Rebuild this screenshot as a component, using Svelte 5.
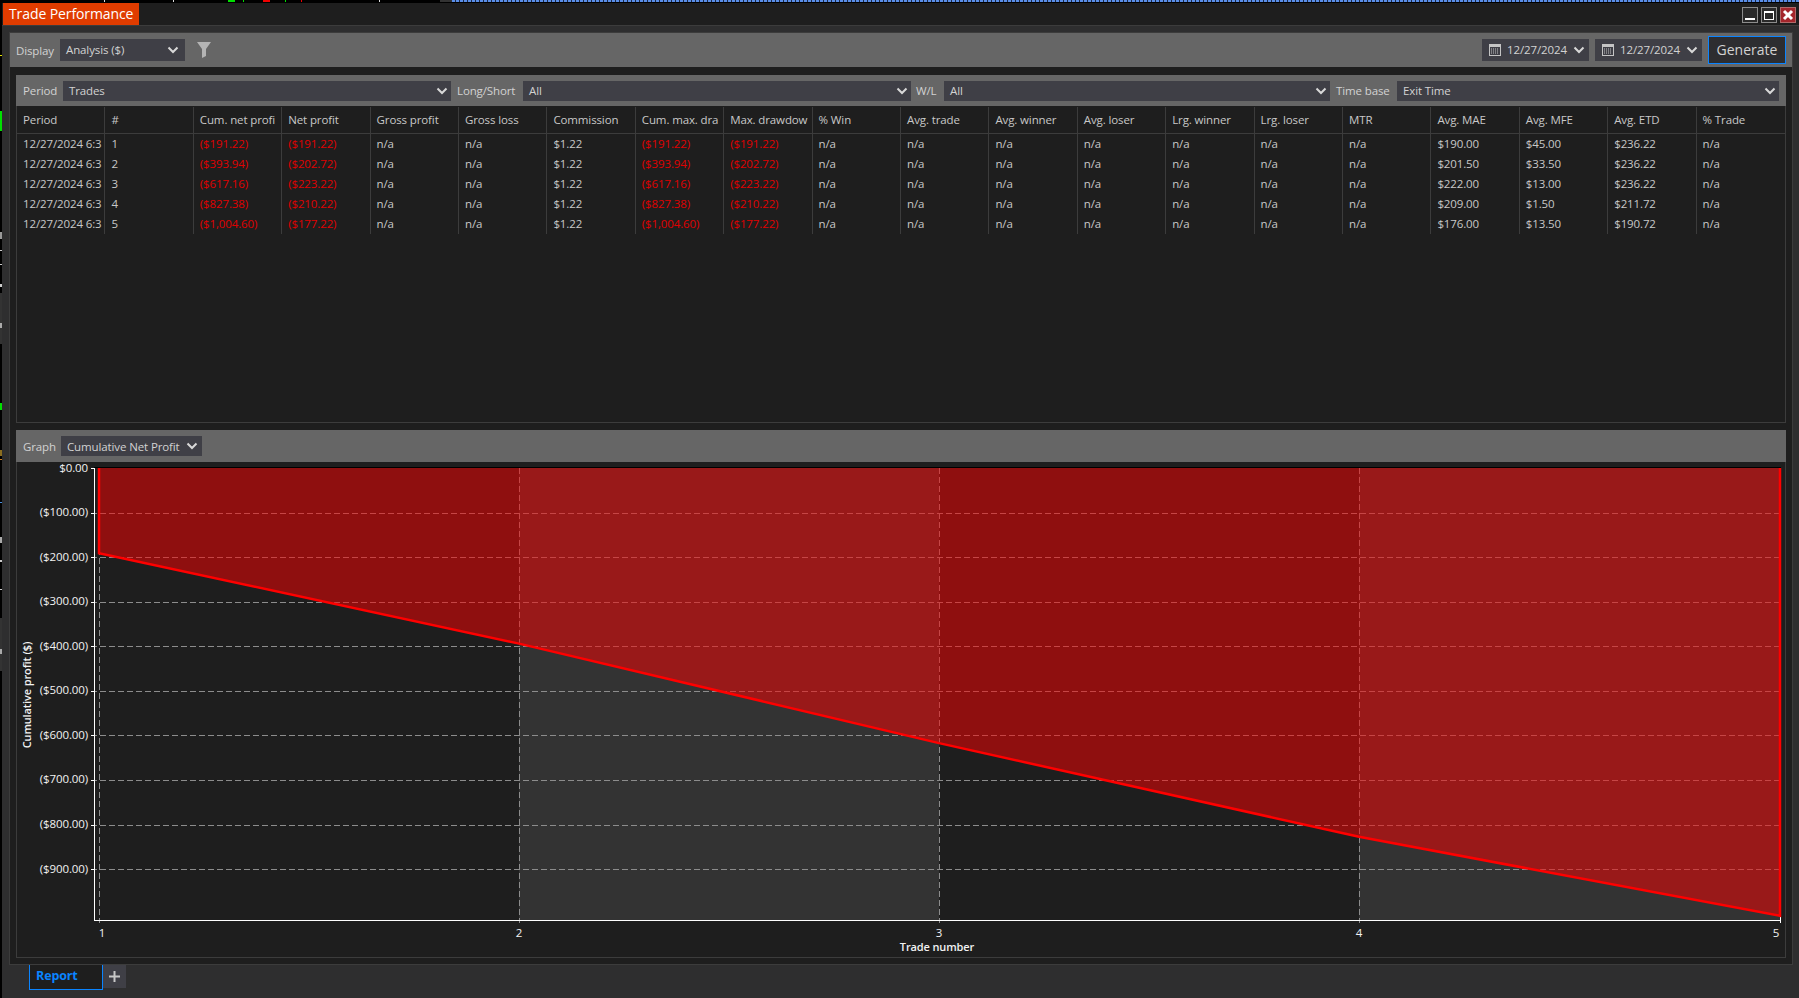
<script lang="ts">
  const headers = ['Period', '#', 'Cum. net profi', 'Net profit', 'Gross profit', 'Gross loss', 'Commission', 'Cum. max. dra', 'Max. drawdow', '% Win', 'Avg. trade', 'Avg. winner', 'Avg. loser', 'Lrg. winner', 'Lrg. loser', 'MTR', 'Avg. MAE', 'Avg. MFE', 'Avg. ETD', '% Trade'];

  const trades = [
    { n: 1, cum: '($191.22)', net: '($191.22)', mae: '$190.00', mfe: '$45.00', etd: '$236.22' },
    { n: 2, cum: '($393.94)', net: '($202.72)', mae: '$201.50', mfe: '$33.50', etd: '$236.22' },
    { n: 3, cum: '($617.16)', net: '($223.22)', mae: '$222.00', mfe: '$13.00', etd: '$236.22' },
    { n: 4, cum: '($827.38)', net: '($210.22)', mae: '$209.00', mfe: '$1.50', etd: '$211.72' },
    { n: 5, cum: '($1,004.60)', net: '($177.22)', mae: '$176.00', mfe: '$13.50', etd: '$190.72' },
  ];

  const rows = trades.map((t) => [
    '12/27/2024 6:3', t.n, t.cum, t.net, 'n/a', 'n/a', '$1.22', t.cum, t.net,
    'n/a', 'n/a', 'n/a', 'n/a', 'n/a', 'n/a', 'n/a', t.mae, t.mfe, t.etd, 'n/a',
  ]);
  const redCols = [2, 3, 7, 8];

  const yOf = (v: number) => 468 + v * 0.4457;
  const xs = [99, 519, 939, 1359, 1780];
  const cums = [191.22, 393.94, 617.16, 827.38, 1004.6];
  const linePts = xs.map((x, i) => `${x},${yOf(cums[i]).toFixed(1)}`).join(' ');
  const outline = `99,468 ${linePts} 1780,468`;
  const yTicks = [100, 200, 300, 400, 500, 600, 700, 800, 900];
  const xLabels = [[102, '1'], [519, '2'], [939, '3'], [1359, '4'], [1776, '5']];

  const topBits = [
    [104, 1, '#ddd'], [173, 1, '#ddd'], [228, 7, '#00e000'], [243, 1, '#00e000'], [263, 7, '#f00000'],
    [285, 1, '#00e000'], [301, 1, '#f00000'], [379, 1, '#ddd'], [440, 12, '#333'],
  ];
  const leftBits = [
    [55, 1, '#e6e600'], [111, 20, '#00e000'], [232, 7, '#999'], [250, 1, '#ccc'], [264, 1, '#ccc'], [284, 3, '#ccc'],
    [293, 51, '#333'], [323, 5, '#aaa'], [403, 7, '#00e000'], [450, 6, '#8a6d1f'], [459, 1, '#d08020'],
    [502, 1, '#4a90e2'], [537, 6, '#aaa'], [560, 2, '#ccc'], [589, 1, '#ccc'], [618, 53, '#333'], [649, 5, '#aaa'],
  ];
</script>

{#snippet chevron()}
  <svg class="chev" width="12" height="8" viewBox="0 0 12 8"><path d="M1.5 1.5 6 6l4.5-4.5" fill="none" stroke="#d8d8d8" stroke-width="2" /></svg>
{/snippet}

{#snippet calendar()}
  <svg class="cal" width="12" height="12" viewBox="0 0 12 12">
    <rect x="0.5" y="0.5" width="11" height="11" fill="#3f3f46" stroke="#c4c4c4" />
    <rect x="1" y="1" width="10" height="2" fill="#c4c4c4" />
    <path d="M2 5h8M2 7h8M2 9h8" stroke="#c4c4c4" stroke-dasharray="1 1" />
  </svg>
{/snippet}

<div class="screen">
  <div class="topstrip">
    {#each topBits as b}
      <i style="left:{b[0]}px;width:{b[1]}px;background:{b[2]}"></i>
    {/each}
    <i class="dashes"></i>
  </div>
  <div class="main">
    <div class="leftstrip">
      {#each leftBits as b}
        <i style="top:{b[0] - 3}px;height:{b[1]}px;background:{b[2]}"></i>
      {/each}
    </div>
    <div class="window">
      <div class="titlebar">
        <div class="title">Trade Performance</div>
        <div class="winbtns">
          <span class="wb"><b class="min"></b></span>
          <span class="wb"><b class="max"></b></span>
          <span class="wb close">
            <svg width="12" height="12" viewBox="0 0 12 12"><path d="M2 2l8 8M10 2l-8 8" stroke="#fff" stroke-width="3" /></svg>
          </span>
        </div>
      </div>

      <div class="content">
        <div class="outer">
          <div class="toolbar top">
            <span class="lbl l-display">Display</span>
            <div class="sel display"><span>Analysis ($)</span>{@render chevron()}</div>
            <svg class="filter" width="14" height="16" viewBox="0 0 14 16"><path d="M0 0h14L9 7v7l-4 2V7z" fill="#b4b4b4" /></svg>
            <div class="spacer"></div>
            <div class="sel date">{@render calendar()}<span>12/27/2024</span>{@render chevron()}</div>
            <div class="sel date">{@render calendar()}<span>12/27/2024</span>{@render chevron()}</div>
            <button class="generate">Generate</button>
          </div>

          <div class="inner">
            <div class="grid-panel">
              <div class="toolbar filters">
                <span class="lbl l-period">Period</span>
                <div class="sel f1"><span>Trades</span>{@render chevron()}</div>
                <span class="lbl l-ls">Long/Short</span>
                <div class="sel f2"><span>All</span>{@render chevron()}</div>
                <span class="lbl l-wl">W/L</span>
                <div class="sel f3"><span>All</span>{@render chevron()}</div>
                <span class="lbl l-tb">Time base</span>
                <div class="sel f4"><span>Exit Time</span>{@render chevron()}</div>
              </div>
              <div class="table">
                {#each headers as h}
                  <div class="th">{h}</div>
                {/each}
                {#each rows as row}
                  {#each row as cell, c}
                    <div class="td" class:red={redCols.includes(c)}>{cell}</div>
                  {/each}
                {/each}
              </div>
            </div>

            <div class="graph-panel">
              <div class="toolbar graphbar">
                <span class="lbl l-graph">Graph</span>
                <div class="sel g1"><span>Cumulative Net Profit</span>{@render chevron()}</div>
              </div>
              <svg class="chart" width="1767" height="495" viewBox="17 462 1767 495">
                <rect x="519" y="468" width="420" height="452" fill="#333" />
                <rect x="1359" y="468" width="421" height="452" fill="#333" />
                {#each yTicks as t}
                  <line x1="91" x2="1780" y1={Math.round(yOf(t)) + 0.5} y2={Math.round(yOf(t)) + 0.5} stroke="#8c8c8c" stroke-dasharray="6 3" />
                  <line x1="91" x2="95" y1={Math.round(yOf(t)) + 0.5} y2={Math.round(yOf(t)) + 0.5} stroke="#fff" />
                  <text class="tick" x="88" y={yOf(t) + 3.5} text-anchor="end">(${t}.00)</text>
                {/each}
                {#each xs.slice(0, 4) as x}
                  <line x1={x + 0.5} x2={x + 0.5} y1="468" y2="923" stroke="#8c8c8c" stroke-dasharray="6 3" />
                {/each}
                <line x1="1780.5" x2="1780.5" y1="916" y2="923" stroke="#fff" />
                <line x1="91" x2="95" y1="468.5" y2="468.5" stroke="#fff" />
                <text class="tick" x="88" y="471.5" text-anchor="end">$0.00</text>
                <line x1="94" x2="1781" y1="467.5" y2="467.5" stroke="#000" />
                <polygon points={outline} fill="#ff0000" fill-opacity="0.5" />
                <polyline points={outline} fill="none" stroke="#ff0000" stroke-width="2.5" />
                <line x1="94.5" x2="94.5" y1="468" y2="921" stroke="#fff" />
                <line x1="94" x2="1781" y1="920.5" y2="920.5" stroke="#fff" />
                {#each xLabels as l}
                  <text class="tick" x={l[0]} y="937" text-anchor="middle">{l[1]}</text>
                {/each}
                <text class="axis" x="937" y="951" text-anchor="middle">Trade number</text>
                <text class="axis" transform="translate(31 695) rotate(-90)" text-anchor="middle">Cumulative profit ($)</text>
              </svg>
            </div>
          </div>
        </div>

        <div class="tabs">
          <div class="tab">Report</div>
          <div class="plus">
            <svg width="11" height="11" viewBox="0 0 11 11"><path d="M5.5 0v11M0 5.5h11" stroke="#c8c8c8" stroke-width="2" /></svg>
          </div>
        </div>
      </div>
    </div>
  </div>
</div>

<style>
  :global(body) {
    margin: 0;
    background: #000;
    overflow: hidden;
  }
  .screen {
    width: 1799px;
    height: 998px;
    display: flex;
    flex-direction: column;
    font-family: "Open Sans", sans-serif;
    font-size: 11.5px;
    letter-spacing: -0.12px;
    color: #c8c8c8;
    background: #000;
    overflow: hidden;
  }
  .topstrip {
    height: 3px;
    position: relative;
    flex: none;
  }
  .topstrip i {
    position: absolute;
    top: 0;
    height: 2px;
  }
  .topstrip .dashes {
    left: 452px;
    right: 0;
    height: 2px;
    background: repeating-linear-gradient(90deg, #5a8ee8 0 3px, #1e2a44 3px 4px);
  }
  .main {
    flex: 1;
    display: flex;
    min-height: 0;
  }
  .leftstrip {
    width: 2px;
    flex: none;
    position: relative;
  }
  .leftstrip i {
    position: absolute;
    left: 0;
    width: 2px;
  }
  .window {
    flex: 1;
    display: flex;
    flex-direction: column;
    min-width: 0;
    background: #2e2e2f;
  }
  .titlebar {
    height: 23px;
    box-sizing: border-box;
    flex: none;
    display: flex;
    justify-content: space-between;
    background: #1e1e1e;
    border-bottom: 1px solid #3c3c3c;
    padding-left: 1px;
  }
  .title {
    width: 136px;
    box-sizing: border-box;
    padding-left: 6px;
    background: #e03c00;
    color: #fff;
    font-size: 14px;
    letter-spacing: -0.1px;
    line-height: 21px;
    white-space: nowrap;
  }
  .winbtns {
    display: flex;
    gap: 3px;
    padding: 4px 3px 0 0;
  }
  .wb {
    width: 16px;
    height: 16px;
    box-sizing: border-box;
    border: 1px solid #8c8c8c;
    background: #2a2a2a;
    position: relative;
    display: flex;
    align-items: center;
    justify-content: center;
  }
  .wb .min {
    position: absolute;
    left: 2px;
    right: 2px;
    bottom: 2px;
    height: 2px;
    background: #fff;
  }
  .wb .max {
    width: 10px;
    height: 9px;
    border: 1px solid #fff;
    border-top-width: 2px;
    box-sizing: border-box;
  }
  .wb.close {
    background: #a4262c;
    border-color: #b06a6a;
  }
  .content {
    flex: 1;
    display: flex;
    flex-direction: column;
    min-height: 0;
  }
  .outer {
    margin: 6px 6px 0 7px;
    height: 933px;
    flex: none;
    box-sizing: border-box;
    border: 1px solid #3c3c3c;
    background: #1e1e1e;
    display: flex;
    flex-direction: column;
  }
  .toolbar {
    background: #666;
    display: flex;
    align-items: center;
    flex: none;
  }
  .toolbar.top {
    height: 34px;
    padding: 0 6px;
    box-sizing: border-box;
  }
  .lbl {
    color: #d2d2d2;
    white-space: nowrap;
    flex: none;
  }
  .l-display { width: 44px; }
  .sel {
    background: #3f3f46;
    color: #d2d2d2;
    display: flex;
    align-items: center;
    box-sizing: border-box;
    padding: 0 4px 0 6px;
    white-space: nowrap;
    flex: none;
  }
  .sel .chev {
    margin-left: auto;
  }
  .sel .cal {
    margin-right: 6px;
  }
  .display {
    width: 125px;
    height: 22px;
    padding-right: 6px;
  }
  .filter {
    margin-left: 12px;
  }
  .spacer {
    flex: 1;
  }
  .date {
    width: 107px;
    height: 22px;
    margin-right: 6px;
    padding-left: 7px;
  }
  .generate {
    width: 78px;
    height: 28px;
    box-sizing: border-box;
    border: 1px solid #0a84ff;
    background: #2d2d30;
    color: #d2d2d2;
    font-family: inherit;
    font-size: 14px;
    padding: 0 0 2px;
  }
  .top .sel span {
    margin-top: -1px;
  }
  .inner {
    flex: 1;
    min-height: 0;
    margin: 8px 6px 6px 6px;
    display: flex;
    flex-direction: column;
    gap: 7px;
  }
  .grid-panel {
    height: 348px;
    flex: none;
    box-sizing: border-box;
    border: 1px solid #3c3c3c;
    border-top: 0;
    display: flex;
    flex-direction: column;
  }
  .filters {
    height: 31px;
    margin: 0 -1px;
  }
  .filters .sel {
    height: 20px;
    padding-right: 3px;
  }
  .l-period { margin-left: 7px; width: 40px; }
  .f1 { width: 388px; }
  .l-ls { margin-left: 6px; width: 66px; }
  .f2 { width: 388px; }
  .l-wl { margin-left: 5px; width: 28px; }
  .f3 { width: 386px; }
  .l-tb { margin-left: 6px; width: 61px; }
  .f4 { width: 382px; }
  .table {
    margin-top: 1px;
    display: grid;
    grid-template-columns: repeat(20, 1fr);
    grid-template-rows: 27px repeat(5, 20px);
  }
  .th, .td {
    box-sizing: border-box;
    padding: 0 0 2px 6px;
    border-right: 1px solid #3c3c3c;
    white-space: nowrap;
    overflow: hidden;
    display: flex;
    align-items: center;
  }
  .th {
    border-bottom: 1px solid #3c3c3c;
  }
  .th:nth-child(20), .td:nth-child(20n) {
    border-right: 0;
  }
  .td.red {
    color: #e00000;
  }
  .graph-panel {
    flex: 1;
    min-height: 0;
    box-sizing: border-box;
    border: 1px solid #3c3c3c;
    border-top: 0;
    display: flex;
    flex-direction: column;
  }
  .graphbar {
    height: 32px;
    margin: 0 -1px;
    padding-left: 7px;
  }
  .l-graph { width: 38px; }
  .g1 {
    width: 141px;
    height: 20px;
  }
  .chart {
    display: block;
    flex: none;
    overflow: visible;
  }
  .tick {
    fill: #f2f2f2;
    font-size: 11.5px;
    font-family: "Open Sans", sans-serif;
  }
  .axis {
    fill: #f2f2f2;
    font-size: 11px;
    font-weight: 600;
    font-family: "Open Sans", sans-serif;
  }
  .tabs {
    display: flex;
    align-items: flex-start;
    padding-left: 27px;
  }
  .tab {
    width: 74px;
    height: 25px;
    box-sizing: border-box;
    padding-left: 6px;
    background: #1e1e1e;
    border: 1px solid #0a84ff;
    border-top: 0;
    color: #0a84ff;
    font-weight: 700;
    font-size: 12.5px;
    line-height: 21px;
  }
  .plus {
    width: 23px;
    height: 23px;
    background: #3f3f46;
    display: flex;
    align-items: center;
    justify-content: center;
  }
</style>
